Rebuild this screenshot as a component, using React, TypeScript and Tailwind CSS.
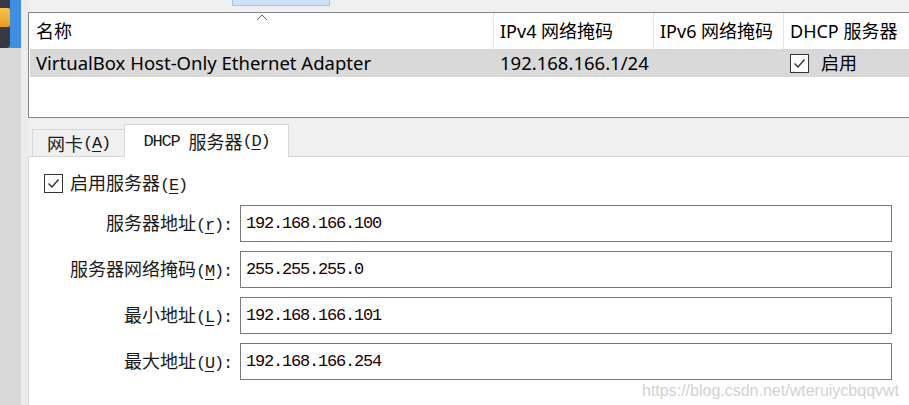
import React from "react";

const UI = "font-[Noto_Sans,Noto_Sans_CJK_SC,sans-serif]";
const MONO = "font-[Liberation_Mono,monospace] text-[17px] tracking-[-1.2px] whitespace-pre";
const CJK = "font-[Noto_Sans_CJK_SC,sans-serif] text-[18px]";

function Check({ className = "" }: { className?: string }) {
  return (
    <div className={"w-[19px] h-[19px] border border-[#333333] bg-white flex items-center justify-center shrink-0 " + className}>
      <svg width="17" height="17" viewBox="0 0 17 17">
        <path d="M3.5 8.5 L7 12 L13.5 4.5" fill="none" stroke="#333333" strokeWidth="1.4" />
      </svg>
    </div>
  );
}

function C({ children }: { children: React.ReactNode }) {
  return <span className={CJK}>{children}</span>;
}
function M({ children }: { children: React.ReactNode }) {
  return <span className={MONO}>{children}</span>;
}
function U({ children }: { children: React.ReactNode }) {
  return <span className="underline underline-offset-[3px] decoration-1">{children}</span>;
}

function Row({ label, value }: { label: React.ReactNode; value: string }) {
  return (
    <div className="flex items-center h-[37px]">
      <div className="w-[188px] text-right whitespace-nowrap text-[#1a1a1a] leading-none">{label}</div>
      <div className="ml-[8px] w-[652px] h-[37px] border border-[#7a7a7a] bg-white flex items-center pl-[5px]">
        <span className={MONO + " text-[#1a0000]"}>{value}</span>
      </div>
    </div>
  );
}

export default function App() {
  return (
    <div className="w-[909px] h-[405px] overflow-hidden bg-[#f0f0f0] flex relative">
      {/* left strip */}
      <div className="w-[21px] flex flex-col shrink-0">
        <div className="h-[48px] bg-[#3f8ee6] flex">
          <div className="w-[10px] h-[48px] bg-[#363943] rounded-br-[4px] flex flex-col">
            <div className="mt-[8px] h-[19px] w-[10px] bg-gradient-to-b from-[#f7c44a] to-[#e79a1c] rounded-r-[2px]" />
          </div>
        </div>
        <div className="flex-1 bg-[#d9d9d9]" />
      </div>
      <div className="w-[7px] bg-[#ececec] shrink-0" />

      {/* main */}
      <div className="flex-1 flex flex-col min-w-0">
        {/* top stub */}
        <div className="h-[12px] relative">
          <div className="ml-[204px] w-[98px] h-[6px] bg-[#cce4f7] border border-t-0 border-[#99c9ef]" />
        </div>

        {/* list */}
        <div className={"h-[106px] border border-r-0 border-[#828790] bg-white relative " + UI}>
          <div className="flex h-[36px] text-[18px] text-black">
            <div className="w-[464px] pl-[7px] flex items-center relative">
              名称
              <svg className="absolute left-[227px] top-[1px]" width="12" height="7" viewBox="0 0 12 7">
                <path d="M1 6 L6 1 L11 6" fill="none" stroke="#666" strokeWidth="1" />
              </svg>
            </div>
            <div className="w-[160px] border-l border-[#e5e5e5] pl-[6px] flex items-center whitespace-nowrap">IPv4 网络掩码</div>
            <div className="w-[130px] border-l border-[#e5e5e5] pl-[6px] flex items-center whitespace-nowrap">IPv6 网络掩码</div>
            <div className="flex-1 border-l border-[#e5e5e5] pl-[6px] flex items-center whitespace-nowrap">DHCP 服务器</div>
          </div>
          <div className="ml-[1px] h-[28px] bg-[#d9d9d9] flex items-center text-[18.5px] text-black">
            <div className="w-[463px] pl-[6px] whitespace-nowrap">VirtualBox Host-Only Ethernet Adapter</div>
            <div className="w-[160px] pl-[7px] whitespace-nowrap">192.168.166.1/24</div>
            <div className="w-[130px]" />
            <div className="flex-1 pl-[7px] flex items-center">
              <Check />
              <span className="ml-[12px] text-[18px]">启用</span>
            </div>
          </div>
        </div>

        {/* tabs */}
        <div className="h-[38px] flex items-end">
          <div className="ml-[4px] w-[93px] h-[27px] border border-b-0 border-[#d9d9d9] bg-[#f0f0f0] flex items-center justify-center text-[#1a1a1a] leading-none">
            <C>网卡</C>
            <M>(<U>A</U>)</M>
          </div>
          <div className="w-[165px] h-[33px] border border-b-0 border-[#d9d9d9] bg-white flex items-center justify-center text-[#1a1a1a] leading-none relative top-[1px] -ml-[1px]">
            <M>{"DHCP "}</M>
            <C>服务器</C>
            <M>(<U>D</U>)</M>
          </div>
        </div>

        {/* panel */}
        <div className="flex-1 bg-white border-l border-t border-[#d9d9d9] pl-[15px] pt-[16px]">
          <div className="flex items-center h-[20px] leading-none text-[#1a1a1a]">
            <Check />
            <span className="ml-[7px]">
              <C>启用服务器</C>
              <M>(<U>E</U>)</M>
            </span>
          </div>
          <div className="mt-[12px] flex flex-col gap-[9px]">
            <Row label={<><C>服务器地址</C><M>(<U>r</U>):</M></>} value="192.168.166.100" />
            <Row label={<><C>服务器网络掩码</C><M>(<U>M</U>):</M></>} value="255.255.255.0" />
            <Row label={<><C>最小地址</C><M>(<U>L</U>):</M></>} value="192.168.166.101" />
            <Row label={<><C>最大地址</C><M>(<U>U</U>):</M></>} value="192.168.166.254" />
          </div>
        </div>
      </div>

      <div className="absolute left-[642px] top-[379px] text-[16px] font-[Liberation_Sans,Arial,sans-serif] text-[#d2d2d2] whitespace-nowrap">
        https://blog.csdn.net/wteruiycbqqvwt
      </div>
    </div>
  );
}
